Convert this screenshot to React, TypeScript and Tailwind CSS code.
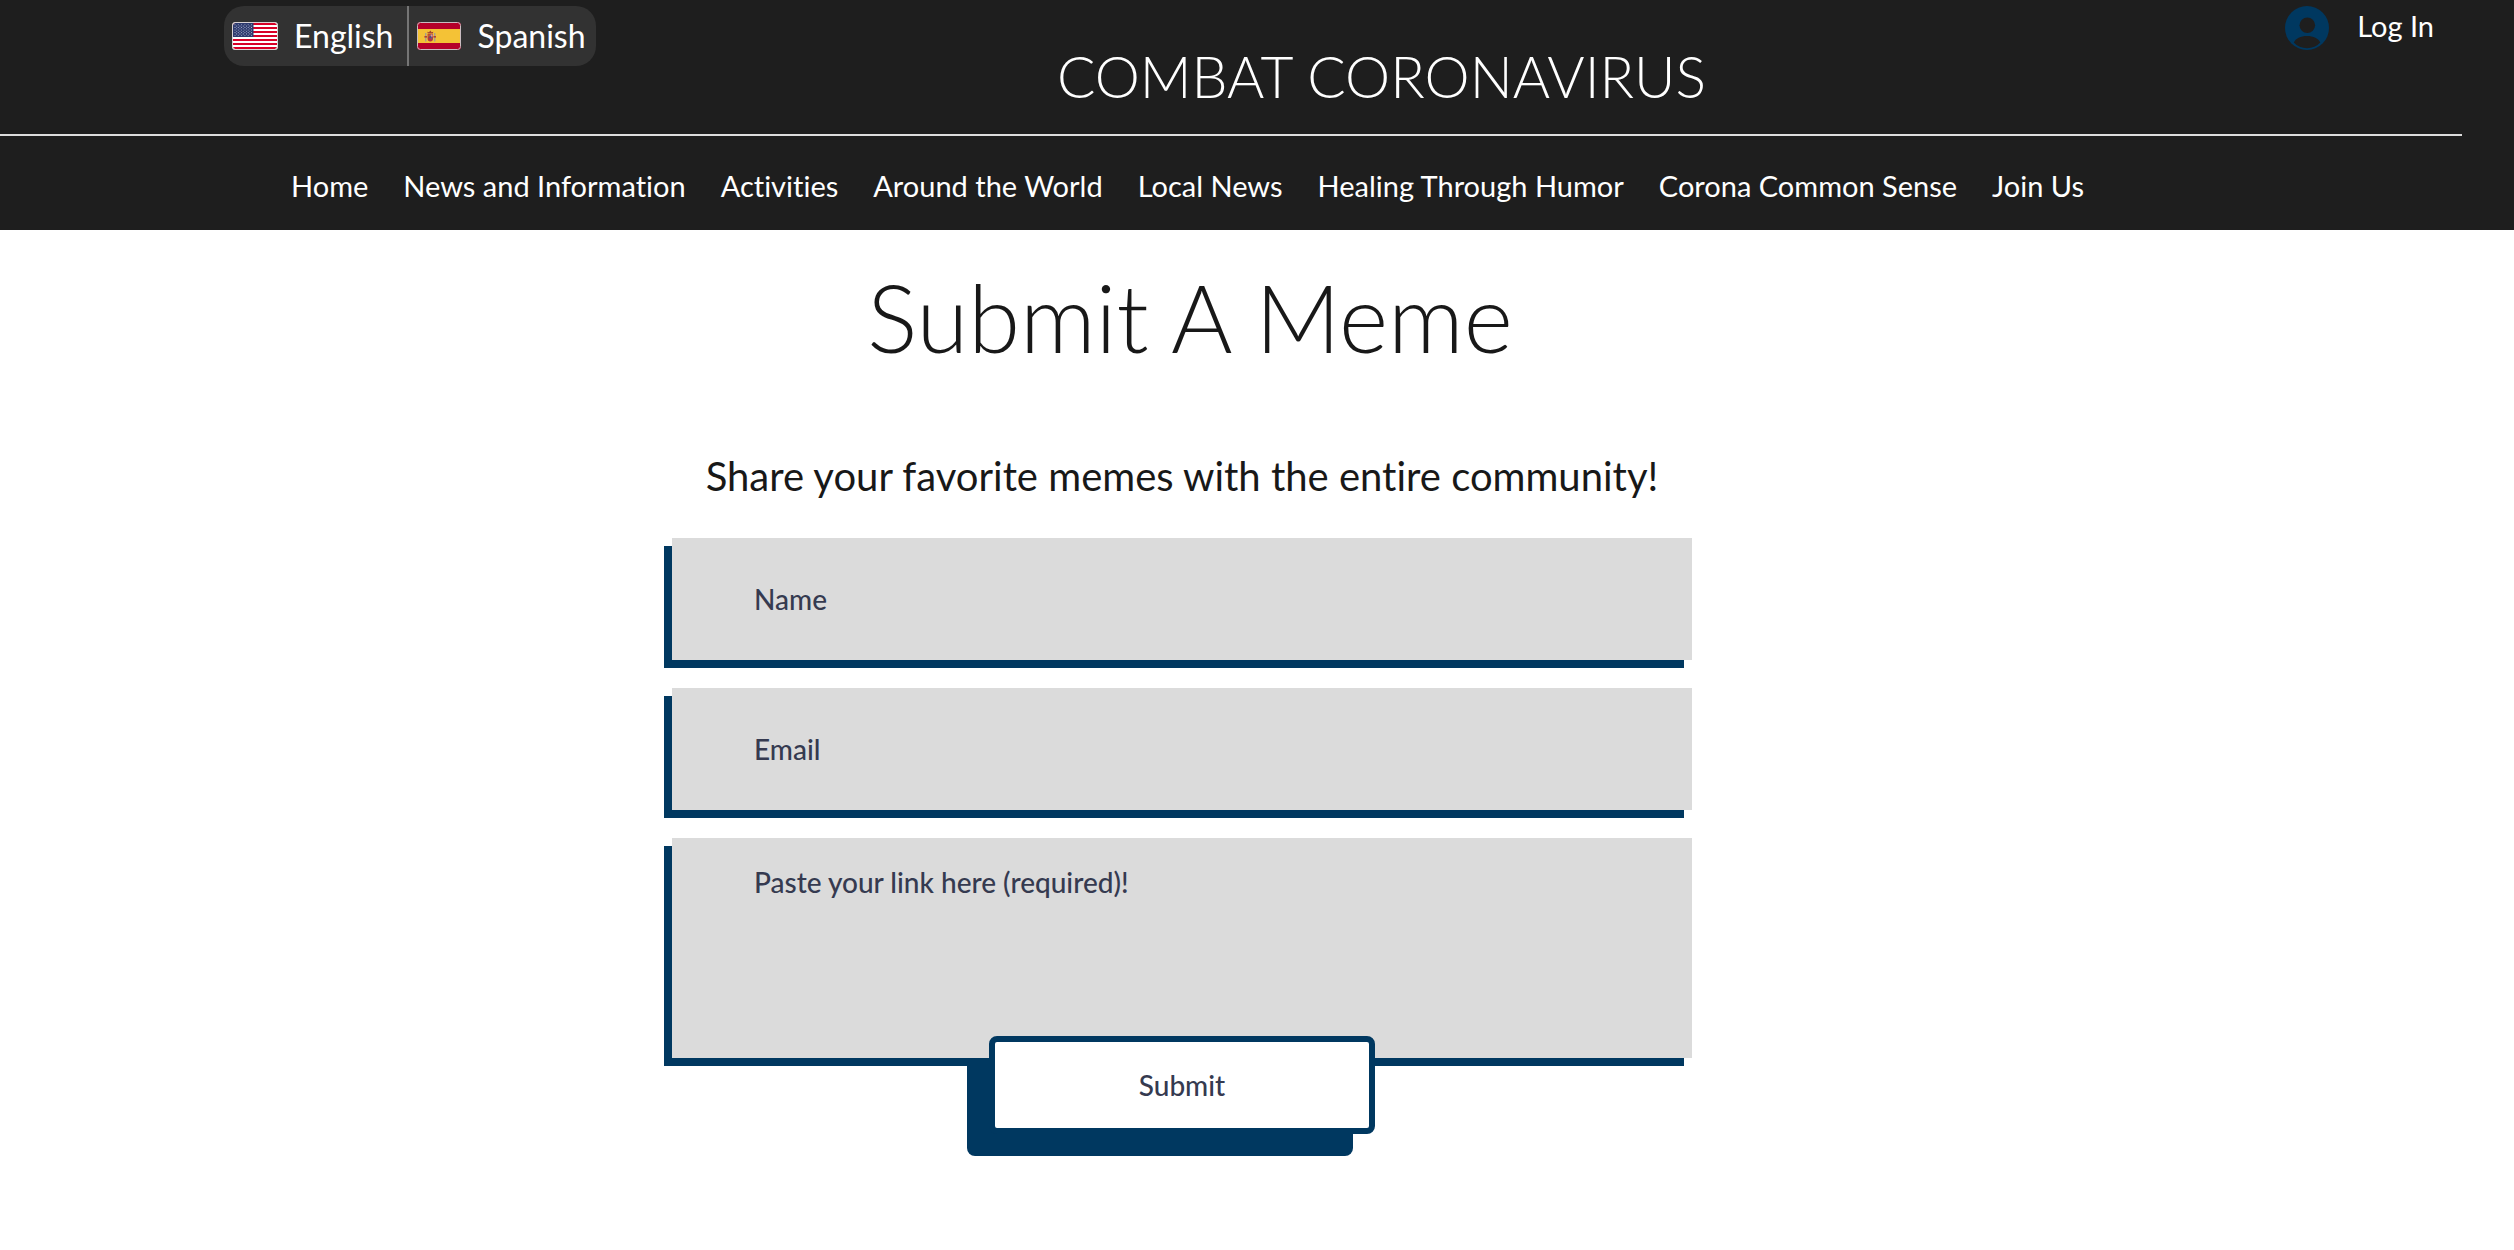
const navLinks = [
  "Home",
  "News and Information",
  "Activities",
  "Around the World",
  "Local News",
  "Healing Through Humor",
  "Corona Common Sense",
  "Join Us",
];

const stripes = [0, 1, 2, 3, 4, 5, 6];
const starRows = [0, 1, 2, 3, 4];
const starColumns = [0, 1, 2, 3, 4, 5];

function UsFlag() {
  return (
    <svg viewBox="0 0 46 28" className="h-7 w-[46px] shrink-0" aria-hidden="true">
      <defs>
        <clipPath id="us-flag">
          <rect x="1" y="1" width="44" height="26" rx="2.5" />
        </clipPath>
      </defs>
      <rect width="46" height="28" rx="3.5" fill="#cfc8c9" />
      <g clipPath="url(#us-flag)">
        <rect x="1" y="1" width="44" height="26" fill="#fff" />
        {stripes.map((i) => (
          <rect key={i} x="1" y={1 + i * 4} width="44" height="2" fill="#d80027" />
        ))}
        <rect x="1" y="1" width="20.5" height="14" fill="#2e3a6e" />
        {starRows.map((r) =>
          starColumns.map((c) => (
            <g key={`${r}-${c}`} fill="#a9b0cc">
              <circle cx={3 + c * 3.3} cy={2.8 + r * 2.6} r="0.55" />
              {r < 4 && c < 5 && <circle cx={4.65 + c * 3.3} cy={4.1 + r * 2.6} r="0.55" />}
            </g>
          )),
        )}
      </g>
      <rect x="0.5" y="0.5" width="45" height="27" rx="3" fill="none" stroke="#d9d2d3" />
    </svg>
  );
}

function SpainFlag() {
  return (
    <svg viewBox="0 0 44 28" className="h-7 w-11 shrink-0" aria-hidden="true">
      <rect width="44" height="28" rx="3.5" fill="#b5002a" />
      <rect x="0.5" y="7" width="43" height="14" fill="#f4c236" />
      <rect x="8" y="11" width="1.4" height="8.5" fill="#a9a08a" />
      <rect x="17" y="11" width="1.4" height="8.5" fill="#a9a08a" />
      <rect x="7.4" y="14" width="2.6" height="1.6" fill="#b0413a" />
      <rect x="16.4" y="14" width="2.6" height="1.6" fill="#b0413a" />
      <path d="M10.6 12h5.4v4.6a2.7 2.9 0 0 1-5.4 0z" fill="#b23a3c" />
      <rect x="11" y="12.4" width="2.2" height="2.3" fill="#c4562c" />
      <rect x="13.6" y="12.4" width="2" height="2.3" fill="#c9a3a3" />
      <rect x="13.6" y="15.2" width="2" height="2.2" fill="#8c4f6e" />
      <circle cx="13.3" cy="15" r="0.9" fill="#2f5d95" />
      <path d="M10.8 11.6l-.5-1.8 1.7.5 1.3-1.8 1.3 1.8 1.7-.5-.5 1.8z" fill="#a34431" />
      <rect x="0.5" y="0.5" width="43" height="27" rx="3" fill="none" stroke="#c9bcc0" />
    </svg>
  );
}

function Avatar() {
  return (
    <svg viewBox="0 0 44 44" className="size-11 shrink-0" aria-hidden="true">
      <circle cx="22" cy="22" r="22" fill="#003860" />
      <circle cx="22.3" cy="19.2" r="7.8" fill="#1e1e1e" />
      <path d="M8.8 36.6C10.5 32.5 15.6 30 22 30s11.5 2.5 13.3 6.6C32 40.3 27.2 42.3 22 42.3S12.1 40.3 8.800 36.600z" fill="#1e1e1e" />
    </svg>
  );
}

export default function App() {
  return (
    <div className="min-h-screen bg-white font-['Lato',sans-serif] text-[#181818] [font-variant-ligatures:none]">
      <header className="bg-[#1e1e1e] text-white">
        <div className="flex h-[134px] items-start pt-1.5 pr-20 pl-56">
          <div className="flex h-[60px] overflow-hidden rounded-[20px] bg-[#323232] text-[32px] leading-10">
            <button type="button" className="flex items-center gap-4 border-r-2 border-[#757575] pr-3.5 pl-2">
              <UsFlag />
              English
            </button>
            <button type="button" className="flex items-center gap-4 pr-2.5 pl-2">
              <SpainFlag />
              Spanish
            </button>
          </div>
          <p className="mt-[42px] min-w-0 flex-1 pr-[118px] text-center text-[57px] leading-[56px] font-light">
            COMBAT CORONAVIRUS
          </p>
          <button type="button" className="flex items-center gap-7 text-[29px] leading-10">
            <Avatar />
            <span className="pb-1">Log In</span>
          </button>
        </div>
        <hr className="mr-[52px] border-0 border-t-2 border-[#dcdcdc]" />
        <nav className="flex h-[94px] items-center justify-center gap-[35px] pt-1.5 pr-[139px] text-[29px] leading-9">
          {navLinks.map((label) => (
            <a key={label} href="#" className="whitespace-nowrap">
              {label}
            </a>
          ))}
        </nav>
      </header>

      <main className="flex flex-col items-center pt-[37px] pr-[150px] pb-24">
        <h1 className="pl-4 text-[94px] leading-[100px] font-light">Submit A Meme</h1>
        <p className="mt-[85px] text-[40px] leading-[48px]">
          Share your favorite memes with the entire community!
        </p>
        <form className="mt-[38px] flex w-full max-w-[1020px] flex-col gap-7 text-[28px] leading-8 font-medium text-[#353a50]">
          <input
            type="text"
            aria-label="Name"
            placeholder="Name"
            className="h-[122px] w-full bg-[#dbdbdb] px-[82px] shadow-[-8px_8px_0_#003860] placeholder:text-[#353a50] placeholder:opacity-100"
          />
          <input
            type="email"
            aria-label="Email"
            placeholder="Email"
            className="h-[122px] w-full bg-[#dbdbdb] px-[82px] shadow-[-8px_8px_0_#003860] placeholder:text-[#353a50] placeholder:opacity-100"
          />
          <div className="flex flex-col items-center">
            <textarea
              aria-label="Paste your link here (required)!"
              placeholder="Paste your link here (required)!"
              required
              className="h-[220px] w-full resize-none bg-[#dbdbdb] px-[82px] pt-7 shadow-[-8px_8px_0_#003860] placeholder:text-[#353a50] placeholder:opacity-100"
            />
            <button
              type="submit"
              className="z-10 -mt-[22px] h-[98px] w-[386px] rounded-lg border-6 border-[#003860] bg-white shadow-[-22px_22px_0_#003860]"
            >
              Submit
            </button>
          </div>
        </form>
      </main>
    </div>
  );
}
